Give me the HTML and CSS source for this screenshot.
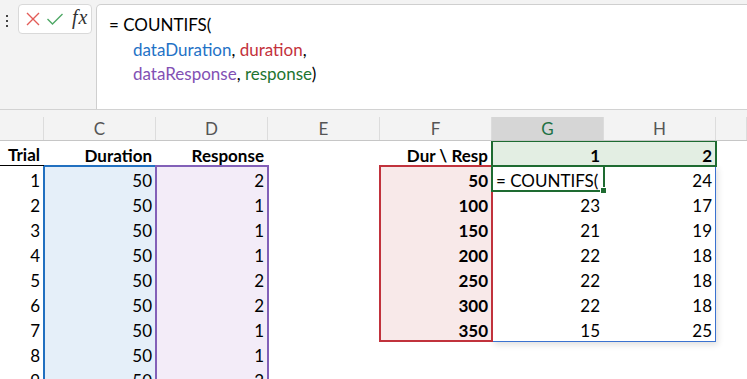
FILE: index.html
```html
<!DOCTYPE html>
<html lang="en">
<head>
    <meta charset="UTF-8">
    <title>COUNTIFS</title>
    <link rel="stylesheet" href="styles.css">
</head>
<body>
    <div class="topbar">
        <div class="grip"><span></span><span></span><span></span></div>
        <div class="tools">
            <svg class="tool" width="16" height="16" viewBox="0 0 16 16">
                <path d="M2 2 L14 14 M14 2 L2 14" stroke="#e35c58" stroke-width="1.4" fill="none"/>
            </svg>
            <svg class="tool" width="18" height="16" viewBox="0 0 18 16">
                <path d="M1.5 8 L6.5 13 L16.5 3" stroke="#4fa866" stroke-width="1.4" fill="none"/>
            </svg>
            <span class="fx">fx</span>
        </div>
        <div class="formula-box">
            <div class="fline">= COUNTIFS(</div>
            <div class="fline indent"><span class="c-blue">dataDuration</span>, <span class="c-red">duration</span>,</div>
            <div class="fline indent"><span class="c-purple">dataResponse</span>, <span class="c-green">response</span>)</div>
        </div>
    </div>

    <div class="col-headers">
        <div class="ch"></div>
        <div class="ch">C</div>
        <div class="ch">D</div>
        <div class="ch">E</div>
        <div class="ch">F</div>
        <div class="ch selected">G</div>
        <div class="ch">H</div>
        <div class="ch"></div>
    </div>

    <div class="sheet">
        <!-- range highlights, drawn under the cell text -->
        <div class="ranges">
            <div class="range r-duration"></div>
            <div class="range r-response"></div>
            <div class="range r-result"></div>
            <div class="range r-dur"></div>
            <div class="range r-resp"></div>
            <div class="range r-active"><span class="handle"></span></div>
        </div>

        <div class="cells">
            <div class="row">
                <div class="cell b underline">Trial</div>
                <div class="cell b">Duration</div>
                <div class="cell b">Response</div>
                <div class="cell"></div>
                <div class="cell b">Dur \ Resp</div>
                <div class="cell b">1</div>
                <div class="cell b">2</div>
                <div class="cell"></div>
            </div>
            <div class="row">
                <div class="cell">1</div><div class="cell">50</div><div class="cell">2</div><div class="cell"></div>
                <div class="cell b">50</div><div class="cell left">= COUNTIFS(</div><div class="cell">24</div><div class="cell"></div>
            </div>
            <div class="row">
                <div class="cell">2</div><div class="cell">50</div><div class="cell">1</div><div class="cell"></div>
                <div class="cell b">100</div><div class="cell">23</div><div class="cell">17</div><div class="cell"></div>
            </div>
            <div class="row">
                <div class="cell">3</div><div class="cell">50</div><div class="cell">1</div><div class="cell"></div>
                <div class="cell b">150</div><div class="cell">21</div><div class="cell">19</div><div class="cell"></div>
            </div>
            <div class="row">
                <div class="cell">4</div><div class="cell">50</div><div class="cell">1</div><div class="cell"></div>
                <div class="cell b">200</div><div class="cell">22</div><div class="cell">18</div><div class="cell"></div>
            </div>
            <div class="row">
                <div class="cell">5</div><div class="cell">50</div><div class="cell">2</div><div class="cell"></div>
                <div class="cell b">250</div><div class="cell">22</div><div class="cell">18</div><div class="cell"></div>
            </div>
            <div class="row">
                <div class="cell">6</div><div class="cell">50</div><div class="cell">2</div><div class="cell"></div>
                <div class="cell b">300</div><div class="cell">22</div><div class="cell">18</div><div class="cell"></div>
            </div>
            <div class="row">
                <div class="cell">7</div><div class="cell">50</div><div class="cell">1</div><div class="cell"></div>
                <div class="cell b">350</div><div class="cell">15</div><div class="cell">25</div><div class="cell"></div>
            </div>
            <div class="row">
                <div class="cell">8</div><div class="cell">50</div><div class="cell">1</div><div class="cell"></div>
                <div class="cell"></div><div class="cell"></div><div class="cell"></div><div class="cell"></div>
            </div>
            <div class="row">
                <div class="cell">9</div><div class="cell">50</div><div class="cell">2</div><div class="cell"></div>
                <div class="cell"></div><div class="cell"></div><div class="cell"></div><div class="cell"></div>
            </div>
        </div>
    </div>
</body>
</html>
```

FILE: styles.css
```css
body {
    margin: 0;
    padding: 0;
    width: 747px;
    height: 379px;
    overflow: hidden;
    background: #f3f3f3;
    font-family: Lato, "Open Sans", sans-serif;
    font-size: 17px;
    color: #000;
}

/* formula bar */

.topbar {
    height: 105px;
    padding-top: 4px;
    display: flex;
    align-items: flex-start;
    border-bottom: 1px solid #d2d2d2;
}

.grip {
    width: 18px;
    padding-top: 11px;
    display: flex;
    flex-direction: column;
    align-items: center;
    gap: 3px;
    margin-left: -2px;
    margin-right: 2px;
}

.grip span {
    width: 2px;
    height: 2px;
    background: #444;
}

.tools {
    width: 66px;
    height: 28px;
    background: #fff;
    border: 1px solid #d9d9d9;
    border-radius: 4px;
    display: flex;
    align-items: center;
    padding-left: 6px;
    gap: 5px;
}

.fx {
    font-family: "Liberation Serif", serif;
    font-style: italic;
    font-size: 20px;
    color: #333;
    margin-left: 3px;
    margin-top: -3px;
    letter-spacing: 1px;
}

.formula-box {
    flex: 1;
    height: 105px;
    margin-left: 4px;
    margin-right: -10px;
    background: #fff;
    border: 1px solid #cfcfcf;
    border-bottom: none;
    border-radius: 5px 5px 0 0;
    padding: 8px 12px 0;
    box-sizing: border-box;
}

.fline {
    line-height: 24.5px;
    white-space: nowrap;
}

.fline.indent {
    padding-left: 24px;
}

.c-blue { color: #1f72c6; }
.c-red { color: #c3323c; }
.c-purple { color: #8250b4; }
.c-green { color: #1d7430; }

/* column letters */

.col-headers {
    margin-top: 7px;
    height: 23px;
    display: grid;
    grid-template-columns: 44px repeat(6, 112px) 1fr;
    border-bottom: 1px solid #c6c6c6;
}

.ch {
    display: flex;
    justify-content: center;
    align-items: center;
    color: #555;
    font-size: 17px;
    border-right: 1px solid #dcdcdc;
}

.ch.selected {
    background: #d6d6d6;
    color: #1e7145;
}

/* sheet */

.sheet {
    display: grid;
    background: #fff;
    height: 238px;
    overflow: hidden;
}

.ranges,
.cells {
    grid-area: 1 / 1;
}

.cells {
    position: relative;
    z-index: 1;
}

.ranges {
    display: grid;
    grid-template-columns: 44px repeat(6, 112px) 1fr;
    grid-template-rows: repeat(10, 25px);
}

.range {
    margin: -1px;
    border: 2px solid;
}

.r-duration {
    grid-column: 2;
    grid-row: 2 / 12;
    border-color: #2170c0;
    background: #e5eff9;
}

.r-response {
    grid-column: 3;
    grid-row: 2 / 12;
    border-color: #8260b8;
    background: #f3ecf8;
}

.r-dur {
    grid-column: 5;
    grid-row: 2 / 9;
    border-color: #c1323c;
    background: #f8e9e9;
}

.r-resp {
    grid-column: 6 / 8;
    grid-row: 1;
    border-color: #1e6b31;
    background: #e3eee3;
}

.r-result {
    grid-column: 6 / 8;
    grid-row: 2 / 9;
    border: 1px solid #3a72d0;
    margin: -1px 0 -1px 0;
    box-shadow: 2px 3px 6px rgba(0, 0, 0, 0.12);
}

.r-active {
    grid-column: 6;
    grid-row: 2;
    border-color: #1e6b31;
    background: #fff;
    position: relative;
}

.handle {
    position: absolute;
    right: -4px;
    bottom: -4px;
    width: 5px;
    height: 5px;
    background: #1e6b31;
    border: 1px solid #fff;
}

.row {
    display: grid;
    grid-template-columns: 44px repeat(6, 112px) 1fr;
    height: 25px;
}

.cell {
    display: flex;
    justify-content: flex-end;
    align-items: center;
    padding: 3px 4px 0 0;
    white-space: nowrap;
    overflow: hidden;
    box-sizing: border-box;
}

.cell.b {
    font-weight: bold;
}

.cell.left {
    justify-content: flex-start;
    padding-left: 4px;
    overflow: visible;
}

.cell.underline {
    border-bottom: 1px solid #000;
}
```
